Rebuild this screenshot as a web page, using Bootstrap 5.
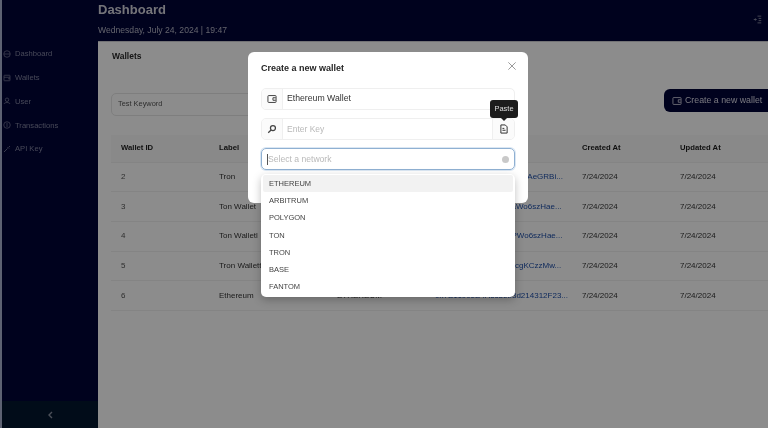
<!DOCTYPE html>
<html lang="en">
<head>
<meta charset="utf-8">
<title>Dashboard</title>
<link href="https://cdn.jsdelivr.net/npm/bootstrap@5.3.0/dist/css/bootstrap.min.css" rel="stylesheet">
<style>
html,body{height:428px;overflow:hidden}
body{font-family:"Liberation Sans",Arial,sans-serif;font-size:8px;background:#fff;color:#2c2c2c;filter:blur(.4px)}
.app-shell{height:428px;width:768px;overflow:hidden}
.side-rail{width:98px;flex:none;background:#000438;border-left:2px solid #a9b3cf;color:#8e90a8}
.side-top{height:42px}
.side-link{height:23.8px;padding-left:1px;gap:4px;font-size:7.6px;color:#8285a0;text-decoration:none}
.side-link svg{width:8px;height:8px;flex:none}
.side-collapse{height:27px;background:#02162e;color:#8b93a3}
.main-pane{width:670px;flex:none;background:#000438}
.head-bar{height:41px;color:#bcbcc6}
.head-title{font-size:13px;font-weight:700;line-height:18px;padding-top:1px;color:#d3d3dc;margin:0}
.head-date{font-size:8.6px;line-height:12px;margin-top:5px;color:#b4b5c4}
.head-icon{top:15px;left:655px;width:9px;height:9px;color:#a7a8b5}
.panel-sheet{background:#fff;height:387px;border-top:1px solid #cfd0d6;width:670px;overflow:hidden}
.panel-title{font-size:8.5px;font-weight:700;margin:8px 0 0 14px;line-height:13px;color:#2a2a2a}
.tool-row{margin-top:26px;padding-left:13px;align-items:flex-start}
.search-box{width:300px;flex:none;height:23px;margin-top:3.5px;border:1px solid #e6e6e6;border-radius:5px;font-size:7.4px;padding-left:6px;color:#555}
.new-btn{background:#000438;color:#dcdce8;border:0;border-radius:6px;height:23px;width:120px;margin-left:253px;font-size:8.8px;padding:0 0 0 8px;flex:none;gap:3px}
.new-btn svg{width:10px;height:10px}
.wallet-table{table-layout:fixed;width:657px;margin:19.5px 0 0 0;font-size:8px}
.table-wrap{padding-left:13px}
.wallet-table th,.wallet-table td{padding:0 0 0 10px;border-bottom:1px solid #f0f0f0;vertical-align:middle;color:#333;background:transparent;white-space:nowrap;overflow:hidden}
.wallet-table th{height:27px;font-weight:700;font-size:7.7px;color:#1d1d1d;background:#fafafa}
.wallet-table td{height:29.7px}
.wallet-table td a{color:#1f4fa8;text-decoration:none}
.dim-cell{color:#555!important}
.dim-layer{background:#000;opacity:.45!important}
.sheet-dialog{width:280px;max-width:none;margin:52px 0 0 248px}
.sheet-box{height:151px;border:0;border-radius:6px;padding:0 13px}
.sheet-title{font-size:9px;font-weight:700;margin:10px 0 0;line-height:13px;color:#262626}
.sheet-close{top:9px;right:11px;width:10px;height:10px;color:#9a9a9a}
.field-row{height:22px;border:1px solid #efefef;border-radius:5px;overflow:hidden;font-size:8.7px}
.field-first{margin-top:13px}
.field-gap{margin-top:8px}
.field-cap{width:21px;flex:none;background:#fbfbfb;border-right:1px solid #efefef;color:#444}
.field-cap svg,.field-end svg{width:10px;height:10px}
.field-text{padding-left:4px;color:#333;flex:1}
.field-mute{color:#b9b9b9;font-size:8.5px}
.field-end{width:22px;flex:none;background:#fbfbfb;border-left:1px solid #efefef;color:#333}
.net-select{height:22px;margin-top:8px;border:1px solid #8fb0d2;border-radius:5px;box-shadow:0 0 0 1px #dbe7f3;padding-left:5px;font-size:8.6px;color:#b9b9b9}
.net-caret{width:1px;height:11px;background:#555}
.net-dot{width:7px;height:7px;border-radius:50%;background:#c9c9c9;margin-left:auto;margin-right:5px}
.net-menu{left:261px;top:174px;width:254px;height:123px;background:#fff;border-radius:5px;box-shadow:0 3px 8px rgba(0,0,0,.25);padding:1px 2px 0;z-index:1060;border:0}
.net-item{height:17.2px;font-size:7.5px;padding:0 6px;color:#444;display:flex;align-items:center;border-radius:2px}
.net-on{background:#f2f2f2}
.paste-tip{left:490px;top:100px;width:28px;height:18px;background:#1c1c1c;color:#ddd;border-radius:3px;font-size:7.5px;z-index:1070}
.paste-tip::after{content:"";position:absolute;left:11px;bottom:-3px;border:3px solid transparent;border-bottom:0;border-top-color:#1c1c1c}
</style>
</head>
<body>
<div class="app-shell d-flex position-relative">
  <aside class="side-rail d-flex flex-column">
    <div class="side-top"></div>
    <nav class="d-flex flex-column">
      <a class="side-link d-flex align-items-center" href="#"><svg viewBox="0 0 16 16" fill="none" stroke="currentColor" stroke-width="1.4"><circle cx="8" cy="8" r="6.5"/><path d="M2 8h12"/></svg>Dashboard</a>
      <a class="side-link d-flex align-items-center" href="#"><svg viewBox="0 0 16 16" fill="none" stroke="currentColor" stroke-width="1.4"><rect x="2" y="2.5" width="12" height="11" rx="1"/><path d="M2 6.5h12M10 9.5h4"/></svg>Wallets</a>
      <a class="side-link d-flex align-items-center" href="#"><svg viewBox="0 0 16 16" fill="none" stroke="currentColor" stroke-width="1.4"><circle cx="8" cy="5.5" r="3.5"/><path d="M2 14c1-4 11-4 12 0"/></svg>User</a>
      <a class="side-link d-flex align-items-center" href="#"><svg viewBox="0 0 16 16" fill="none" stroke="currentColor" stroke-width="1.4"><circle cx="8" cy="8" r="6.5"/><path d="M8 4v8"/></svg>Transactions</a>
      <a class="side-link d-flex align-items-center" href="#"><svg viewBox="0 0 16 16" fill="none" stroke="currentColor" stroke-width="1.6"><path d="M2 14l7-7M9 4l3 3M12 2l2 2"/></svg>API Key</a>
    </nav>
    <div class="side-collapse mt-auto d-flex align-items-center justify-content-center"><svg width="7" height="8" viewBox="0 0 7 8" fill="none" stroke="currentColor" stroke-width="1.4"><path d="M5 1L2 4l3 3"/></svg></div>
  </aside>
  <main class="main-pane position-relative">
    <header class="head-bar">
      <h1 class="head-title">Dashboard</h1>
      <div class="head-date">Wednesday, July 24, 2024 | 19:47</div>
      <svg class="head-icon position-absolute" viewBox="0 0 12 12" fill="none" stroke="currentColor"><path d="M6 1.500h5M7.500 4.500h3.500M7.500 7.500h3.500M6 10.500h5M1 6h3M3 4.500 4.500 6 3 7.500"/></svg>
    </header>
    <section class="panel-sheet">
      <h2 class="panel-title">Wallets</h2>
      <div class="tool-row d-flex">
        <div class="search-box d-flex align-items-center">Test Keyword</div>
        <button class="new-btn d-flex align-items-center" type="button"><svg viewBox="0 0 16 16" fill="none" stroke="currentColor" stroke-width="1.300"><rect x="1.500" y="2.500" width="13" height="11" rx="1"/><path d="M14 6h-4v4h4"/></svg>Create a new wallet</button>
      </div>
      <div class="table-wrap">
      <table class="table wallet-table">
        <colgroup><col style="width:98px"><col style="width:118px"><col style="width:98px"><col style="width:147px"><col style="width:98px"><col style="width:98px"></colgroup>
        <thead><tr><th>Wallet ID</th><th>Label</th><th>Network</th><th>Address</th><th>Created At</th><th>Updated At</th></tr></thead>
        <tbody>
          <tr><td class="dim-cell">2</td><td>Tron</td><td>TRON</td><td><a href="#">TQx7mP2rLk9vNd3sYpL4AeGRBi...</a></td><td>7/24/2024</td><td>7/24/2024</td></tr>
          <tr><td class="dim-cell">3</td><td>Ton Wallet</td><td>TON</td><td><a href="#">EQCk3vT8nRzLbK5daWo6szHae...</a></td><td>7/24/2024</td><td>7/24/2024</td></tr>
          <tr><td class="dim-cell">4</td><td>Ton Walletl</td><td>TON</td><td><a href="#">EQCk3vT8nRzLbK5dPWo6szHae...</a></td><td>7/24/2024</td><td>7/24/2024</td></tr>
          <tr><td class="dim-cell">5</td><td>Tron Wallett</td><td>TRON</td><td><a href="#">TBn4wY7uJq2eR8dnhcgKCzzMw...</a></td><td>7/24/2024</td><td>7/24/2024</td></tr>
          <tr><td class="dim-cell">6</td><td>Ethereum</td><td>ETHEREUM</td><td><a href="#">0x7B1c90eE4A5c8eb3d214312F23...</a></td><td>7/24/2024</td><td>7/24/2024</td></tr>
        </tbody>
      </table>
      </div>
    </section>
  </main>
</div>

<div class="modal-backdrop show dim-layer"></div>
<div class="modal d-block" tabindex="-1">
  <div class="modal-dialog sheet-dialog">
    <div class="modal-content sheet-box position-relative">
      <h5 class="sheet-title">Create a new wallet</h5>
      <svg class="sheet-close position-absolute" viewBox="0 0 11 11" fill="none" stroke="currentColor" stroke-width="1.100"><path d="M1.500 1.500l8 8M9.500 1.500l-8 8"/></svg>
      <div class="field-row field-first d-flex align-items-center">
        <div class="field-cap h-100 d-flex align-items-center justify-content-center"><svg viewBox="0 0 16 16" fill="none" stroke="currentColor" stroke-width="1.600"><rect x="1.500" y="2.500" width="13" height="11" rx="1"/><path d="M14 6h-4.500v4H14"/></svg></div>
        <div class="field-text">Ethereum Wallet</div>
      </div>
      <div class="field-row field-gap d-flex align-items-center">
        <div class="field-cap h-100 d-flex align-items-center justify-content-center"><svg viewBox="0 0 16 16" fill="none" stroke="currentColor" stroke-width="2"><circle cx="9.500" cy="6.500" r="4"/><path d="M6.500 9.500L2 14"/></svg></div>
        <div class="field-text field-mute">Enter Key</div>
        <div class="field-end h-100 d-flex align-items-center justify-content-center"><svg viewBox="0 0 16 16" fill="none" stroke="currentColor" stroke-width="1.600"><path d="M3 1.500h7l3 3v10H3zM5.500 10h5M5.500 7h3"/></svg></div>
      </div>
      <div class="net-select d-flex align-items-center"><span class="net-caret"></span>Select a network<span class="net-dot"></span></div>
    </div>
  </div>
</div>
<div class="net-menu position-absolute">
  <div class="net-item net-on">ETHEREUM</div>
  <div class="net-item">ARBITRUM</div>
  <div class="net-item">POLYGON</div>
  <div class="net-item">TON</div>
  <div class="net-item">TRON</div>
  <div class="net-item">BASE</div>
  <div class="net-item">FANTOM</div>
</div>
<div class="paste-tip position-absolute d-flex align-items-center justify-content-center">Paste</div>
<script src="https://cdn.jsdelivr.net/npm/bootstrap@5.3.0/dist/js/bootstrap.bundle.min.js"></script>
</body>
</html>
